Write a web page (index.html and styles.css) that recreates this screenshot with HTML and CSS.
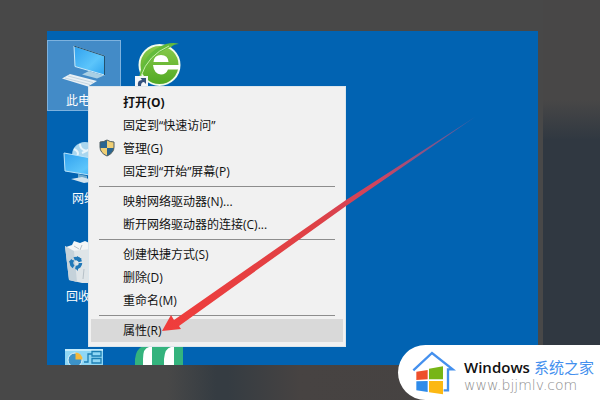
FILE: index.html
```html
<!DOCTYPE html>
<html lang="zh-CN">
<head>
  <meta charset="UTF-8" />
  <title>此电脑 - 属性</title>
  <link rel="stylesheet" href="styles.css">
</head>
<body>
<div class="desktop">
  <div class="icons">
    <div class="icon selected">
      <svg viewBox="0 0 48 48">
        <defs>
          <linearGradient id="screen" x1="0" y1="0" x2="1" y2="1">
            <stop offset="0" stop-color="#2fa0ee"/>
            <stop offset="0.6" stop-color="#5cc5fb"/>
            <stop offset="1" stop-color="#2ea3ef"/>
          </linearGradient>
        </defs>
        <path d="M14 3 L44.500 13 V32 L15 23.500Z" fill="url(#screen)" stroke="#c9e9fa"/>
        <path d="M14 3 L44.500 13 V32" fill="none" stroke="#23516f"/>
        <path d="M29 28 L44 32.500 L37 35.500 L22 31.500Z" fill="#a9cfe4"/>
        <path d="M2 35.500 L10 31 L37 38 L28 43.500Z" fill="#e8f0f5"/>
        <path d="M5 35 L30 41.500 M8 33 L33 39.500" stroke="#b4c8d5" stroke-width=".7"/>
      </svg>
      <span>此电脑</span>
    </div>
    <div class="icon">
      <svg viewBox="0 0 48 48">
        <defs>
          <linearGradient id="leaf" x1="0" y1="0" x2="0" y2="1">
            <stop offset="0" stop-color="#8acb4c"/>
            <stop offset="1" stop-color="#4fa821"/>
          </linearGradient>
        </defs>
        <circle cx="25.500" cy="22" r="20" fill="url(#leaf)" stroke="#f2fbea" stroke-width="2"/>
        <path d="M19.500 19 Q20 12 27 12 Q34 12 34.500 19Z" fill="#fff"/>
        <path d="M19 22 H46 V26.500 H34 Q32 31.500 27 31.500 Q20 31 19 22Z" fill="#fff"/>
        <path d="M5 35 Q9 9 32 1 Q40 -1 45 1 Q40 1 37 4 Q17 11 8 32Z" fill="#63bb3c"/>
        <path d="M7 33 Q14 12 35 3" fill="none" stroke="#c9efa6"/>
        <path d="M1 33 H14 V46 H1Z" fill="#f4f6f8"/>
        <path d="M4 43 Q3 37 8 37 L6.500 35 H12 V41 L10 39 Q7 39 7 43Z" fill="#35527e"/>
      </svg>
    </div>
    <div class="icon">
      <svg viewBox="0 0 48 48">
        <circle cx="25" cy="14" r="13" fill="#a9d6ef"/>
        <path d="M14 8 Q20 11 17 15 M20 3 Q20 9 27 10 M22 12 L30 8" stroke="#e8f5fb" stroke-width="2" fill="none"/>
        <path d="M4 12 L42 19 V36 L5 30Z" fill="url(#screen)" stroke="#b9e3fa"/>
        <path d="M18 33 L27 35 V39 L18 37Z" fill="#6faacd"/>
        <path d="M11 38 L22 36 L36 40 L24 42Z" fill="#d3e4ee"/>
      </svg>
      <span>网络</span>
    </div>
    <div class="icon"></div>
    <div class="icon">
      <svg viewBox="0 0 48 48">
        <path d="M6 8 L12 6 L14 2 L20 4 L25 2 L38 8 L36 13 L8 12Z" fill="#f4f6f7"/>
        <path d="M5 7 L12 12 L40 9 L35 44 H22 L9 41Z" fill="#dfe5e8"/>
        <path d="M5 7 L14 12 L17 43 L9 41Z" fill="#c5d2da"/>
        <path d="M14 7 L19 10 M22 6 L20 11 M24 30 L23 40" stroke="#b7c1c8" fill="none"/>
        <circle cx="16" cy="24" r="4.500" fill="none" stroke="#2078b8" stroke-width="3.500" stroke-dasharray="7.400 2"/>
        <path d="M17 17 L22 20 L17 22Z M9 22 L14 21 L11 27Z M18 27 V32 L15 29Z" fill="#2078b8"/>
      </svg>
      <span>回收站</span>
    </div>
    <div class="icon"></div>
    <div class="icon">
      <svg viewBox="0 0 48 48">
        <path d="M5 12 H43 V44 H5Z" fill="#8fd7f5"/>
        <path d="M5 12 H43 V14 H5Z" fill="#c4ecfb"/>
        <circle cx="15" cy="23" r="7" fill="#3d93c8" stroke="#e3f5fc"/>
        <path d="M15.500 22.500 V15.500 A7 7 0 0 1 22.500 22.500Z" fill="#f5b93b"/>
        <path d="M24 25 H28 V17 H32 M32 14.500 H41 V19 H32Z M32 21.500 H41 V26 H32Z" fill="none" stroke="#1c7fb4" stroke-width="1.300"/>
      </svg>
    </div>
    <div class="icon">
      <svg viewBox="0 0 48 48">
        <path d="M1 44 V22 Q2 12 9 9 H49 V44Z" fill="#34b37d"/>
        <path d="M9 44 V22 Q9 11 15 10 H18 V44Z M30 44 V22 Q31 11 37 10 H40 V44Z" fill="#fff"/>
      </svg>
    </div>
  </div>

  <div class="menu">
    <button class="default">打开(O)</button>
    <button>固定到“快速访问”</button>
    <button>
      <svg class="shield" viewBox="0 0 16 18">
        <path d="M8 1 Q11 3 15 3 V8 Q15 14 8 17 Q1 14 1 8 V3 Q5 3 8 1Z" fill="#f0cf74"/>
        <path d="M8 1 V9 H1 V3 Q5 3 8 1Z M8 9 H15 Q14 14 8 17Z" fill="#2a6590"/>
        <path d="M8 1 Q11 3 15 3 V8 Q15 14 8 17 Q1 14 1 8 V3 Q5 3 8 1Z" fill="none" stroke="#4d5d62"/>
      </svg>
      管理(G)
    </button>
    <button>固定到“开始”屏幕(P)</button>
    <hr>
    <button>映射网络驱动器(N)...</button>
    <button>断开网络驱动器的连接(C)...</button>
    <hr>
    <button>创建快捷方式(S)</button>
    <button>删除(D)</button>
    <button>重命名(M)</button>
    <hr>
    <button class="hover">属性(R)</button>
  </div>

  <svg class="arrow" viewBox="0 0 491 334">
    <defs>
      <linearGradient id="fade" gradientUnits="userSpaceOnUse" x1="115" y1="300" x2="428" y2="86">
        <stop offset="0" stop-color="#f03d3b"/>
        <stop offset="0.5" stop-color="#de4146"/>
        <stop offset="0.7" stop-color="#cf4560"/>
        <stop offset="1" stop-color="#8a5a95" stop-opacity="0.6"/>
      </linearGradient>
    </defs>
    <path d="M115 300 L124 284 L127 289 L299 169 L428 86 L299 175 L132 295 L134 298Z" fill="url(#fade)"/>
  </svg>
</div>

<div class="watermark">
  <svg viewBox="95 60 132 135">
    <path d="M99 121 L155 69 L217 118 H203 V181 H190" fill="none" stroke="#4490ee" stroke-width="7"/>
    <path d="M108 125 L142 120 V148 L108 150Z" fill="#ee4f2b"/>
    <path d="M146 116 L188 109 V148 H146Z" fill="#77b516"/>
    <path d="M108 154 L142 153 V186 L108 181Z" fill="#2e8bea"/>
    <path d="M146 153 H188 V193 L146 187Z" fill="#fcb813"/>
  </svg>
  <div>
    <div class="brand"><b>Windows</b><span>系统之家</span></div>
    <div class="site">www.bjjmlv.com</div>
  </div>
</div>
</body>
</html>
```

FILE: styles.css
```css
* {
  box-sizing: border-box;
}
body {
  margin: 0;
  padding: 31px 62px 35px 47px;
  min-height: 100vh;
  font-family: "Open Sans", "Noto Sans CJK SC", sans-serif;
  font-size: 12px;
  background:
    linear-gradient(#484747 25%, #303841 35%, #303841) right / 57px 100% no-repeat,
    linear-gradient(90deg, #484848 28%, #353c42 36%, #353c42 38%, #474342 50%, #444241) bottom / 100% 35px no-repeat,
    #484848;
}
.desktop {
  position: relative;
  min-height: calc(100vh - 66px);
  background: #0163b2;
  overflow: hidden;
}

/* desktop icons, the last row runs off the bottom */
.icons {
  position: absolute;
  top: 9px;
  left: 0;
  display: grid;
  grid-template-columns: 74px 74px;
  grid-auto-rows: 71px;
  row-gap: 27px;
}
.icon {
  display: flex;
  flex-direction: column;
  align-items: center;
  padding-top: 2px;
  border: 1px solid transparent;
  color: #fff;
  line-height: 19px;
  white-space: nowrap;
}
.icon svg {
  width: 48px;
  height: 48px;
  flex-shrink: 0;
  overflow: visible;
}
.icon.selected {
  background: #438bc7;
  border-color: #7db2de;
}

.menu {
  position: absolute;
  top: 55px;
  left: 41px;
  width: 258px;
  padding: 4px 2px;
  background: #f1f1f1;
  border: 1px solid #dce6ec;
}
.menu button {
  display: block;
  position: relative;
  width: 100%;
  height: 23px;
  padding: 0 0 0 32px;
  border: none;
  background: none;
  font: inherit;
  line-height: 23px;
  color: #111;
  text-align: left;
}
.menu button.default {
  font-weight: bold;
}
.menu button.hover,
.menu button:hover {
  background: #d9d9d9;
}
.menu hr {
  margin: 3px 8px;
  border: none;
  border-top: 1px solid #8d8d8d;
}
.shield {
  position: absolute;
  left: 8px;
  top: 2px;
  width: 16px;
  height: 18px;
}
.arrow {
  position: absolute;
  top: 0;
  left: 0;
  width: 491px;
  height: 334px;
  pointer-events: none;
}

.watermark {
  position: absolute;
  right: 0;
  bottom: 0;
  display: flex;
  align-items: center;
  gap: 8px;
  width: 202px;
  height: 55px;
  padding-left: 14px;
  border-radius: 28px 0 0 28px;
  background: #fff;
  white-space: nowrap;
}
.watermark svg {
  width: 44px;
  height: 45px;
  flex-shrink: 0;
}
.brand {
  display: flex;
  gap: 4px;
  margin-top: 4px;
  font-family: "Open Sans", "Noto Sans CJK SC", sans-serif;
  font-size: 15px;
  line-height: 20px;
  color: #111;
}
.brand b {
  font-weight: 600;
}
.brand span {
  color: #4490ee;
}
.site {
  font-family: "DejaVu Sans", sans-serif;
  font-weight: 200;
  font-size: 14px;
  line-height: 16px;
  color: #8c8c8c;
}
```
